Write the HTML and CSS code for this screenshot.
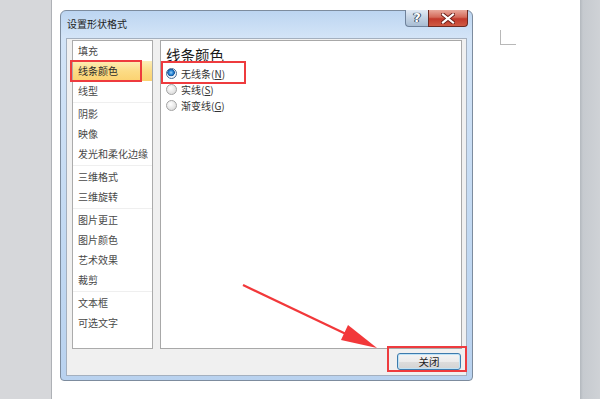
FILE: index.html
```html
<!DOCTYPE html>
<html lang="zh-CN">
<head>
<meta charset="utf-8">
<link rel="stylesheet" href="styles.css">
</head>
<body>
<div class="screen">
  <div class="side-left"></div>
  <div class="page">
    <div class="dialog">
      <div class="titlebar">
        <span class="title">设置形状格式</span>
        <div class="caption-btns">
          <div class="btn-help">?</div>
          <div class="btn-close">
            <svg width="14" height="11" viewBox="0 0 14 11"><path d="M2 1.5 L12 9.5 M12 1.5 L2 9.5" stroke="#6b1e17" stroke-width="4" stroke-linecap="square"/><path d="M2 1.5 L12 9.5 M12 1.5 L2 9.5" stroke="#fff" stroke-width="2.2" stroke-linecap="square"/></svg>
          </div>
        </div>
      </div>
      <div class="body">
        <div class="panes">
          <div class="nav">
            <div class="group">
              <div class="item">填充</div>
              <div class="item selected">线条颜色</div>
              <div class="item">线型</div>
            </div>
            <div class="group">
              <div class="item">阴影</div>
              <div class="item">映像</div>
              <div class="item">发光和柔化边缘</div>
            </div>
            <div class="group">
              <div class="item">三维格式</div>
              <div class="item">三维旋转</div>
            </div>
            <div class="group">
              <div class="item">图片更正</div>
              <div class="item">图片颜色</div>
              <div class="item">艺术效果</div>
              <div class="item">裁剪</div>
            </div>
            <div class="group">
              <div class="item">文本框</div>
              <div class="item">可选文字</div>
            </div>
            <div class="mark mark-nav"></div>
          </div>
          <div class="content">
            <div class="heading">线条颜色</div>
            <div class="option"><span class="radio checked"></span><span>无线条(<u>N</u>)</span></div>
            <div class="option"><span class="radio"></span><span>实线(<u>S</u>)</span></div>
            <div class="option"><span class="radio"></span><span>渐变线(<u>G</u>)</span></div>
            <div class="mark mark-opt"></div>
          </div>
        </div>
        <div class="footer">
          <button class="close-btn">关闭</button>
          <div class="mark mark-btn"></div>
        </div>
      </div>
    </div>
    <div class="corner-mark"></div>
  </div>
  <div class="side-right"></div>
  <svg class="arrow" width="600" height="399" viewBox="0 0 600 399">
    <line x1="243" y1="285" x2="346" y2="334" stroke="#f2383a" stroke-width="2.2"/>
    <polygon points="377,348 341,340 348,325" fill="#f2383a"/>
  </svg>
</div>
</body>
</html>
```

FILE: styles.css
```css
* { box-sizing: border-box; }
html, body { margin: 0; padding: 0; }
body {
  width: 600px;
  height: 399px;
  overflow: hidden;
  font-family: "Noto Sans CJK SC", "Microsoft YaHei", sans-serif;
  background: #fff;
}
.screen {
  position: relative;
  display: flex;
  width: 600px;
  height: 399px;
}
.side-left {
  width: 52px;
  background: #d6d7da;
  border-right: 1px solid #aeb1b6;
}
.side-right {
  width: 20px;
  background: linear-gradient(to right, #b3b8be, #c6cacf 3px, #cfd2d6);
}
.page {
  flex: 1;
  display: flex;
  align-items: flex-start;
  padding: 10px 0 0 8px;
  background: #fff;
}
.corner-mark {
  width: 16px;
  height: 15px;
  margin: 20px 0 0 27px;
  border-left: 1px solid #b8b8b8;
  border-bottom: 1px solid #b8b8b8;
}
.dialog {
  width: 413px;
  height: 371px;
  border: 1px solid #7d8c9e;
  border-radius: 6px 6px 4px 4px;
  background: linear-gradient(to bottom, #bcd5f1, #d3e4f7 26px, #c2d9f2 60%, #b9d2ef);
  padding: 0 5px 4px 5px;
  display: flex;
  flex-direction: column;
}
.titlebar {
  height: 27px;
  display: flex;
  justify-content: space-between;
  align-items: flex-start;
}
.title {
  padding: 6px 0 0 1px;
  font-size: 10px;
  line-height: 14px;
  color: #1e1e1e;
}
.caption-btns {
  display: flex;
  margin: -1px -1px 0 0;
}
.btn-help {
  width: 23px;
  height: 17px;
  border: 1px solid #6f829b;
  border-right: none;
  border-top: none;
  border-radius: 0 0 0 4px;
  background: linear-gradient(to bottom, #e3ebf5, #c3d2e3 50%, #a9bdd3);
  color: #fff;
  font-family: "DejaVu Sans", sans-serif;
  font-weight: bold;
  font-size: 13px;
  line-height: 16px;
  text-align: center;
  text-shadow: 0 0 1px #34485f, 0 0 1px #34485f, 1px 0 0 #34485f, -1px 0 0 #34485f;
}
.btn-close {
  width: 40px;
  height: 17px;
  border: 1px solid #6d2a22;
  border-top: none;
  border-radius: 0 0 4px 0;
  background: linear-gradient(to bottom, #e9a99c, #d46a5a 45%, #c2392b 55%, #cf5a44);
  display: flex;
  align-items: center;
  justify-content: center;
}
.body {
  flex: 1;
  background: #f0f0f0;
  border: 1px solid #a4b0bf;
  display: flex;
  flex-direction: column;
}
.panes {
  display: flex;
  gap: 7px;
  padding: 1px 4px 0 5px;
  height: 310px;
}
.nav {
  position: relative;
  width: 81px;
  height: 309px;
  background: #fff;
  border: 1px solid #ababab;
  padding-top: 0;
}
.group + .group {
  border-top: 1px solid #efefef;
  margin-top: 1px;
  padding-top: 1px;
}
.item {
  height: 20px;
  line-height: 20px;
  padding-left: 5px;
  font-size: 10px;
  color: #484848;
  white-space: nowrap;
}
.item.selected {
  background: linear-gradient(to bottom, #fdeeb8, #fcdc86 50%, #fbd270);
  color: #2a2a2a;
}
.content {
  position: relative;
  flex: 1;
  height: 309px;
  background: #fff;
  border: 1px solid #a8a8a8;
  padding: 4px 5px 0 5px;
}
.heading {
  font-size: 14.5px;
  line-height: 20px;
  color: #1a1a1a;
}
.option {
  display: flex;
  align-items: center;
  gap: 4px;
  height: 16px;
  font-size: 10px;
  color: #333;
}
.option u { text-decoration: underline; }
.radio {
  width: 11px;
  height: 11px;
  border-radius: 50%;
  border: 1px solid #a3a3a3;
  background: radial-gradient(circle at 40% 35%, #ffffff, #e4e4e4 60%, #d2d2d2);
}
.radio.checked {
  border-color: #4b6c93;
  background: radial-gradient(circle at 45% 40%, #9fd0f5 0, #2c8ad8 2px, #12539b 3.5px, #f4f8fc 4px, #dfe6ee);
}
.footer {
  position: relative;
  flex: 1;
  display: flex;
  justify-content: flex-end;
  align-items: flex-start;
  padding: 4px 5px 0 0;
}
.close-btn {
  width: 64px;
  height: 17px;
  padding: 0;
  border: 1px solid #3d7bad;
  border-radius: 3px;
  background: linear-gradient(to bottom, #f4f4f4, #ebebeb 50%, #dddddd 51%, #d3d3d3);
  box-shadow: inset 0 0 0 1px #bfe3f7;
  font-family: "Noto Sans CJK SC", sans-serif;
  font-size: 10.5px;
  line-height: 14px;
  color: #1f1f1f;
}
.mark {
  position: absolute;
  border: 2px solid #ee3b3e;
  pointer-events: none;
}
.mark-nav {
  left: -3px;
  top: 19px;
  width: 72px;
  height: 22px;
}
.mark-opt {
  left: 0;
  top: 20px;
  width: 85px;
  height: 23px;
}
.mark-btn {
  right: -1px;
  top: -3px;
  width: 80px;
  height: 26px;
}
.arrow {
  position: absolute;
  left: 0;
  top: 0;
  pointer-events: none;
}
```
